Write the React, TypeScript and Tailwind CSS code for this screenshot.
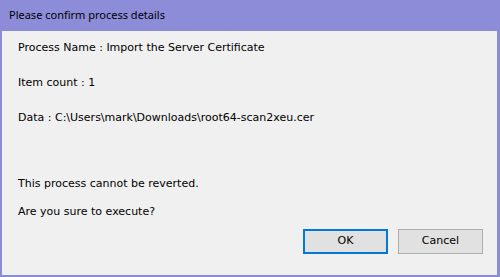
export default function App() {
  const body = { fontFamily: '"DejaVu Sans", sans-serif' }
  return (
    <div className="w-[500px] h-[277px] bg-[#8c8cd8] flex flex-col text-[11px] text-black" style={body}>
      <div className="h-[31px] shrink-0 flex items-center pl-[9px] text-[11px] font-['Noto_Sans',sans-serif]">
        Please confirm process details
      </div>
      <div className="flex-1 ml-[2px] mr-[3px] mb-[2px] bg-[#f0f0f0] flex flex-col pl-[16px]">
        <p className="mt-[9px] h-[16px] leading-[16px]">Process Name : Import the Server Certificate</p>
        <p className="mt-[19px] h-[16px] leading-[16px]">Item count : 1</p>
        <p className="mt-[19px] h-[16px] leading-[16px]">Data : C:\Users\mark\Downloads\root64-scan2xeu.cer</p>
        <p className="mt-[50px] h-[16px] leading-[16px]">This process cannot be reverted.</p>
        <p className="mt-[12px] h-[16px] leading-[16px]">Are you sure to execute?</p>
        <div className="flex justify-end gap-[10px] mt-[9px] pr-[14px]">
          <button className="w-[85px] h-[25px] bg-[#e1e1e1] border-2 border-[#0078d7]">OK</button>
          <button className="w-[85px] h-[25px] bg-[#e1e1e1] border border-[#adadad]">Cancel</button>
        </div>
      </div>
    </div>
  )
}
